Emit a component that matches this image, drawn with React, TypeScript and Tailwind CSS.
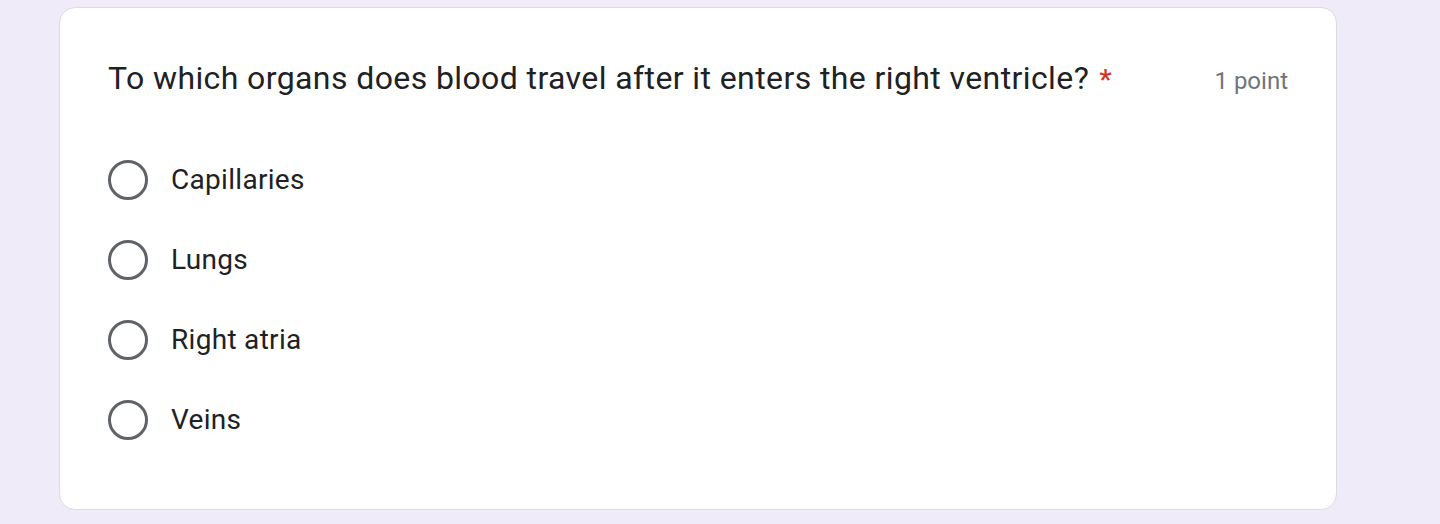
const options = ["Capillaries", "Lungs", "Right atria", "Veins"];

export default function App() {
  return (
    <div className="min-h-screen bg-[#f0ebf8] pl-[59px] pr-[103px] pt-[7px] font-['Roboto',sans-serif]">
      <div className="rounded-[16px] border border-[#dadce0] bg-white px-[48px] pt-[46px] pb-[69px]">
        <div className="flex items-baseline justify-between">
          <div className="text-[32px] leading-[48px] tracking-[0.4px] text-[#202124]">
            To which organs does blood travel after it enters the right ventricle?
            <span className="ml-[10px] text-[28px] font-medium text-[#d93025]">*</span>
          </div>
          <div className="text-[24px] text-[#70757a]">1 point</div>
        </div>
        <div className="mt-[56px] flex flex-col gap-[40px]">
          {options.map((o) => (
            <label key={o} className="flex h-[40px] items-center gap-[23px]">
              <span className="h-[40px] w-[40px] rounded-full border-[3px] border-[#5f6368]" />
              <span className="text-[28px] tracking-[0.3px] text-[#202124]">{o}</span>
            </label>
          ))}
        </div>
      </div>
    </div>
  );
}
